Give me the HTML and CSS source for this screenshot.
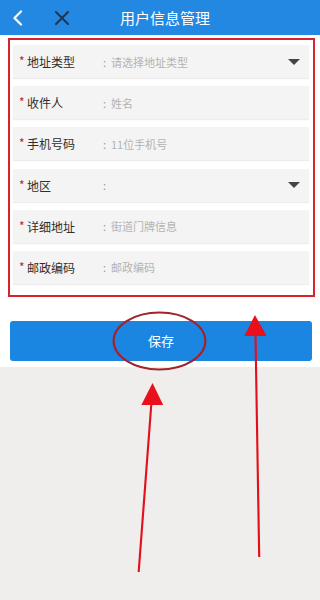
FILE: index.html
```html
<!DOCTYPE html>
<html lang="zh">
<head>
<meta charset="utf-8">
<meta name="viewport" content="width=device-width, initial-scale=1">
<title>用户信息管理</title>
<link rel="stylesheet" href="styles.css">
</head>
<body>
<div class="page">
  <header class="topbar">
    <span class="icon back">
      <svg width="12" height="16" viewBox="0 0 12 16"><path d="M9 1.5 L2.5 8 L9 14.5" fill="none" stroke="#fff" stroke-width="2.2" stroke-linecap="round" stroke-linejoin="round"/></svg>
    </span>
    <span class="icon close">
      <svg width="16" height="16" viewBox="0 0 16 16"><path d="M2 2 L14 14 M14 2 L2 14" fill="none" stroke="#1f3550" stroke-width="2" stroke-linecap="round"/></svg>
    </span>
    <h1 class="title">用户信息管理</h1>
  </header>

  <section class="content">
    <div class="form-box">
      <div class="row">
        <span class="req">*</span><span class="label">地址类型</span><span class="colon">:</span><span class="ph">请选择地址类型</span><span class="caret"></span>
      </div>
      <div class="row">
        <span class="req">*</span><span class="label">收件人</span><span class="colon">:</span><span class="ph">姓名</span>
      </div>
      <div class="row">
        <span class="req">*</span><span class="label">手机号码</span><span class="colon">:</span><span class="ph">11位手机号</span>
      </div>
      <div class="row">
        <span class="req">*</span><span class="label">地区</span><span class="colon">:</span><span class="ph"></span><span class="caret"></span>
      </div>
      <div class="row">
        <span class="req">*</span><span class="label">详细地址</span><span class="colon">:</span><span class="ph">街道门牌信息</span>
      </div>
      <div class="row">
        <span class="req">*</span><span class="label">邮政编码</span><span class="colon">:</span><span class="ph">邮政编码</span>
      </div>
    </div>
    <button class="save">保存</button>
  </section>

  <div class="rest"></div>

  <svg class="annot" viewBox="0 0 300 600" preserveAspectRatio="none">
    <ellipse cx="149.5" cy="341" rx="43" ry="28.5" fill="none" stroke="#a3222c" stroke-width="2"/>
    <line x1="130" y1="572" x2="142" y2="402" stroke="#e3101c" stroke-width="2"/>
    <polygon points="143,383 132.5,405 153,405" fill="#e8101c"/>
    <line x1="243" y1="557" x2="239.5" y2="333" stroke="#e3101c" stroke-width="2"/>
    <polygon points="239,315 229,336 250,336" fill="#e8101c"/>
  </svg>
</div>
</body>
</html>
```

FILE: styles.css
```css
* { box-sizing: border-box; }
html, body { margin: 0; padding: 0; }
body {
  font-family: "Noto Sans CJK SC", "Noto Sans", sans-serif;
  background: #efeeec;
}
.page {
  position: relative;
  width: 100%;
  height: 600px;
  display: flex;
  flex-direction: column;
  overflow: hidden;
}
.topbar {
  height: 35px;
  flex: none;
  background: #2388e2;
  display: flex;
  align-items: center;
  padding-left: 12px;
}
.icon { display: flex; align-items: center; }
.back { width: 12px; }
.close { margin-left: 30px; }
.title {
  margin: 0 0 0 50px;
  font-size: 15px;
  font-weight: normal;
  color: #fff;
}
.content {
  background: #fff;
  padding: 3px 5px 6px 8px;
  flex: none;
}
.form-box {
  border: 2px solid #d8232b;
  padding: 5px 4px 11px 3px;
  display: flex;
  flex-direction: column;
  gap: 8.2px;
}
.row {
  height: 33px;
  background: #f4f4f4;
  box-shadow: 0 1px 1px rgba(0,0,0,0.07);
  display: flex;
  align-items: center;
  padding: 0 9px 0 6px;
}
.req {
  color: #c0242b;
  font-size: 12px;
  width: 8px;
  position: relative;
  top: -1px;
}
.label {
  width: 76px;
  font-size: 12px;
  color: #2e2e2e;
}
.colon {
  font-size: 11px;
  color: #999;
  width: 8px;
}
.ph {
  flex: 1;
  font-size: 11px;
  color: #b3b3b3;
}
.caret {
  width: 0;
  height: 0;
  border-left: 6px solid transparent;
  border-right: 6px solid transparent;
  border-top: 6px solid #444;
}
.save {
  display: block;
  width: calc(100% - 5px);
  height: 40px;
  margin: 24px 0 0 2px;
  border: none;
  border-radius: 3px;
  background: #1b86e2;
  color: #fff;
  font-family: "Noto Sans CJK SC", "Noto Sans", sans-serif;
  font-size: 13px;
  padding: 0;
}
.rest { flex: 1; background: #efeeec; }
.annot {
  position: absolute;
  left: 0;
  top: 0;
  width: 100%;
  height: 100%;
  pointer-events: none;
}
```
